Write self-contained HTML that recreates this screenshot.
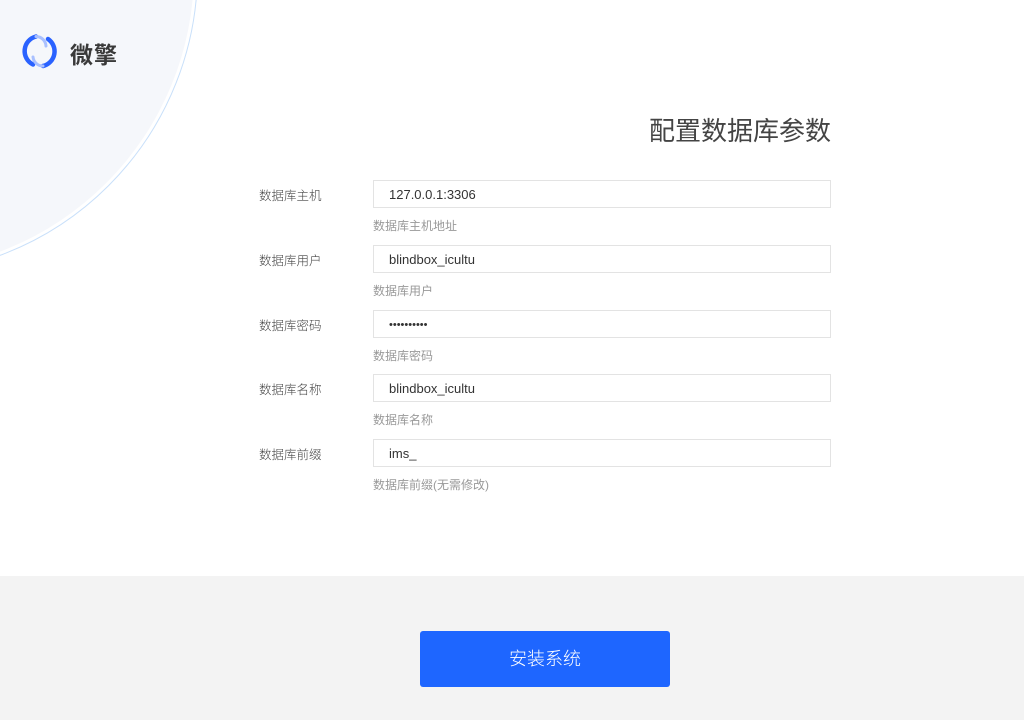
<!DOCTYPE html>
<html><head><meta charset="utf-8"><style>
*{margin:0;padding:0;box-sizing:border-box}
body{width:1024px;height:720px;position:relative;overflow:hidden;background:#fff;font-family:"Liberation Sans","Noto Sans CJK SC",sans-serif;}
.circ{position:absolute;left:-410px;top:-333px;width:608px;height:608px;border-radius:50%;border:1.5px solid #c9e0fa;}
.circ2{position:absolute;left:-406px;top:-329px;width:600px;height:600px;border-radius:50%;background:#f5f7fb;}
.logo{position:absolute;left:70px;top:36px;font-size:23px;font-weight:bold;color:#3a3a3a;letter-spacing:1px}
.title{position:absolute;right:193px;top:111px;font-size:26px;color:#444}
.lab{position:absolute;left:259px;font-size:12.5px;color:#444;font-weight:300}
.inp{position:absolute;left:373px;width:458px;height:28px;border:1px solid #e3e3e3;padding-left:15px;font-size:13px;color:#333;line-height:28px}
.help{position:absolute;left:373px;font-size:12px;color:#999}
.foot{position:absolute;left:0;top:576px;width:1024px;height:144px;background:#f3f3f3}
.btn{position:absolute;left:420px;top:631px;width:250px;height:56px;background:#1e66ff;border-radius:3px;color:#fff;font-size:18px;text-align:center;line-height:56px;font-weight:300}
</style></head><body>
<div class="circ"></div><div class="circ2"></div>
<svg style="position:absolute;left:20px;top:32px" width="40" height="40" viewBox="0 0 40 40">
<path d="M16 4.5 A15 15 0 0 0 13 32.5" fill="none" stroke="#2a62ff" stroke-width="4.5" stroke-linecap="round"/>
<path d="M28 7 A15 15 0 0 1 23 34" fill="none" stroke="#2a62ff" stroke-width="4.5" stroke-linecap="round"/>
<path d="M16 4.5 A10 10 0 0 1 26 14" fill="none" stroke="#a9c0ff" stroke-width="3" stroke-linecap="round"/>
<path d="M23 34 A10 10 0 0 1 13 25" fill="none" stroke="#a9c0ff" stroke-width="3" stroke-linecap="round"/>
</svg>
<div class="logo">微擎</div>
<div class="title">配置数据库参数</div>

<div class="lab" style="top:185px">数据库主机</div>
<div class="inp" style="top:180px">127.0.0.1:3306</div>
<div class="help" style="top:217px">数据库主机地址</div>

<div class="lab" style="top:250px">数据库用户</div>
<div class="inp" style="top:245px">blindbox_icultu</div>
<div class="help" style="top:282px">数据库用户</div>

<div class="lab" style="top:315px">数据库密码</div>
<div class="inp" style="top:310px;font-size:11px">••••••••••</div>
<div class="help" style="top:347px">数据库密码</div>

<div class="lab" style="top:379px">数据库名称</div>
<div class="inp" style="top:374px">blindbox_icultu</div>
<div class="help" style="top:411px">数据库名称</div>

<div class="lab" style="top:444px">数据库前缀</div>
<div class="inp" style="top:439px">ims_</div>
<div class="help" style="top:476px">数据库前缀(无需修改)</div>

<div class="foot"></div>
<div class="btn">安装系统</div>
</body></html>
